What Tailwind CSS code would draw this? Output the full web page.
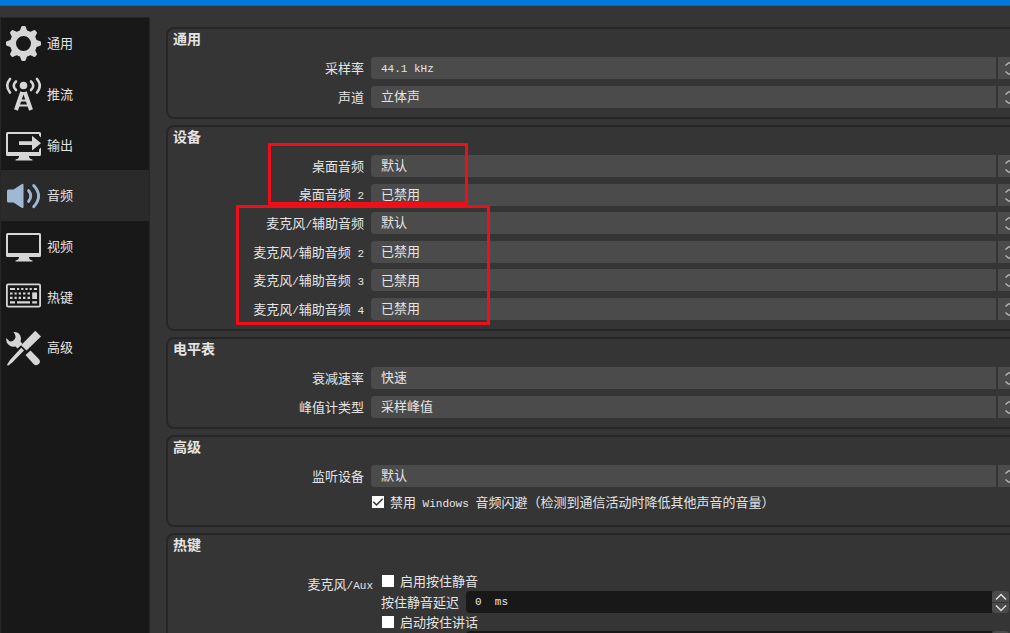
<!DOCTYPE html>
<html lang="zh-CN">

<head>
    <meta charset="UTF-8">
    <meta name="viewport" content="width=device-width, initial-scale=1.0">
    <title>设置 - 音频</title>
    <script src="https://cdn.jsdelivr.net/npm/@tailwindcss/browser@4"></script>
    <style>
        body {
            font-family: 'Liberation Mono', 'Noto Sans CJK SC', monospace;
        }
    </style>
</head>

<body class="bg-[#353535] text-[#e4e4e4] text-[13px] h-screen overflow-hidden flex flex-col">
    <svg class="hidden">
        <symbol id="tooth" viewBox="0 0 36 36">
            <path d="M14.5 7 L16.3 1.8 Q16.6 1 17.4 1 H19.6 Q20.4 1 20.7 1.8 L22.5 7 Z" />
        </symbol>
        <symbol id="updown" viewBox="0 0 24 22">
            <path d="M7.5 8.5 L10.500 6 H13.500 L16.500 8.500 M7.500 14.500 L10.500 17 H13.500 L16.500 14.500" fill="none" stroke="#b4b4b4" stroke-width="1.500" />
        </symbol>
    </svg>

    <div class="h-[6px] shrink-0 bg-[#0078d7] border-b border-[#1464a8]"></div>

    <div class="flex flex-1 min-h-0 pt-[11px]">
        <!-- Sidebar -->
        <nav class="w-[150px] shrink-0 bg-[#181818] border border-b-0 border-[#262626]">
            <div class="h-[355px] flex flex-col">
                <a href="#general" class="flex-1 flex items-center gap-[6px] pl-1">
                    <svg class="w-9 h-9" viewBox="0 0 36 36" fill="#d6d6d6">
                        <circle cx="18.5" cy="18.5" r="10.5" fill="none" stroke="#d6d6d6" stroke-width="6" />
                        <use href="#tooth" width="36" height="36" />
                        <use href="#tooth" width="36" height="36" transform="rotate(45 18.5 18.5)" />
                        <use href="#tooth" width="36" height="36" transform="rotate(90 18.5 18.5)" />
                        <use href="#tooth" width="36" height="36" transform="rotate(135 18.5 18.5)" />
                        <use href="#tooth" width="36" height="36" transform="rotate(180 18.5 18.5)" />
                        <use href="#tooth" width="36" height="36" transform="rotate(225 18.5 18.5)" />
                        <use href="#tooth" width="36" height="36" transform="rotate(270 18.5 18.5)" />
                        <use href="#tooth" width="36" height="36" transform="rotate(315 18.5 18.5)" />
                    </svg>
                    <span class="pt-[3px]">通用</span>
                </a>
                <a href="#stream" class="flex-1 flex items-center gap-[6px] pl-1">
                    <svg class="w-9 h-9" viewBox="0 0 36 36" fill="none" stroke="#d6d6d6" stroke-width="2.6" stroke-linecap="round">
                        <circle cx="18.5" cy="9.5" r="3.8" fill="#d6d6d6" stroke="none" />
                        <path d="M5 3 Q-.5 9.500 5 16.500 M32 3 Q37.500 9.500 32 16.500" />
                        <path d="M11 5.500 Q6.500 9.500 11 14 M26 5.500 Q30.500 9.500 26 14" />
                        <path d="M17.200 16 L11 34 M19.800 16 L26 34" stroke-width="4" stroke-linecap="butt" />
                        <path d="M15 17 H22 M14.500 24.500 H22.500 M12.500 29.500 H24.500" stroke-width="2" stroke-linecap="butt" />
                    </svg>
                    <span class="pt-[3px]">推流</span>
                </a>
                <a href="#output" class="flex-1 flex items-center gap-[6px] pl-1">
                    <svg class="w-9 h-9" viewBox="0 0 36 36" fill="#d6d6d6">
                        <path d="M2.500 5 H34.500 Q36 5 36 6.500 V10.500 L34 8.500 V7 H3 V25 H34 V22.500 L36 20.500 V27.500 Q36 29 34.500 29 H24 Q24 32 27.500 32.500 V33.500 H10.500 V32.500 Q14 32 14 29 H2.500 Q1 29 1 27.500 V6.500 Q1 5 2.500 5 Z" />
                        <path d="M14 14.300 H27 V8.800 L36 16.200 L27 23.500 V18 H14 Z" />
                    </svg>
                    <span class="pt-[3px]">输出</span>
                </a>
                <a href="#audio" aria-current="page" class="flex-1 flex items-center gap-[6px] pl-1 bg-[#2a2a2a]">
                    <svg class="w-9 h-9" viewBox="0 0 36 36" fill="#9fb9d5">
                        <path d="M3.500 11.500 H8.500 L17 6 Q18.500 5.400 18.500 6.900 V29 Q18.500 30.500 17 29.900 L8.500 24.500 H3.500 Q2 24.500 2 23 V13 Q2 11.500 3.500 11.500 Z" />
                        <path d="M23.500 12.500 Q28 18 23.500 23.500" fill="none" stroke="#9fb9d5" stroke-width="2.800" stroke-linecap="round" />
                        <path d="M28.700 7.500 Q38.500 18 28.700 28.800" fill="none" stroke="#9fb9d5" stroke-width="2.800" stroke-linecap="round" />
                    </svg>
                    <span class="pt-[3px]">音频</span>
                </a>
                <a href="#video" class="flex-1 flex items-center gap-[6px] pl-1">
                    <svg class="w-9 h-9" viewBox="0 0 36 36" fill="#d6d6d6">
                        <path fill-rule="evenodd" d="M2.500 5 H34.500 Q36 5 36 6.500 V27.500 Q36 29 34.500 29 H24 Q24 32 27.500 32.500 V33.500 H10.500 V32.500 Q14 32 14 29 H2.500 Q1 29 1 27.500 V6.500 Q1 5 2.500 5 Z M3 7 V25 H34 V7 Z" />
                    </svg>
                    <span class="pt-[3px]">视频</span>
                </a>
                <a href="#hotkeys" class="flex-1 flex items-center gap-[6px] pl-1">
                    <svg class="w-9 h-9" viewBox="0 0 36 36" fill="none" stroke="#d6d6d6">
                        <rect x="1.900" y="5.400" width="33.200" height="22.200" rx="1.200" stroke-width="1.800" />
                        <path d="M5 10 H10 M12 10 H14.200 M16.200 10 H18.400 M20.400 10 H22.600 M24.600 10 H26.800 M28.800 10 H32" stroke-width="2.200" />
                        <path d="M5 14.500 H7.500 M9.500 14.500 H11.700 M13.700 14.500 H16 M18 14.500 H20.500 M22.500 14.500 H25" stroke-width="2.200" />
                        <path d="M5 18.800 H7.500 M9.500 18.800 H11.700 M13.700 18.800 H16 M18 18.800 H20.500 M22.500 18.800 H25" stroke-width="2.200" />
                        <path d="M27.200 16.700 H32" stroke-width="6.600" />
                        <path d="M5 23.300 H10 M12 23.300 H25 M27.200 23.300 H32" stroke-width="2.200" />
                    </svg>
                    <span class="pt-[3px]">热键</span>
                </a>
                <a href="#advanced" class="flex-1 flex items-center gap-[6px] pl-1">
                    <svg class="w-9 h-9" viewBox="0 0 36 36" fill="#d6d6d6">
                        <path d="M30.300 .8 L36 6.500 L21.500 20.500 L16 15.200 Z" />
                        <path d="M16.200 17.700 L19 20.500 L7.500 32.300 L3 35.800 L2 34.800 L5 30 Z" />
                        <path d="M8.500 2 Q13.500 1.500 15.500 6 Q16.500 9 15.500 11.500 L17.500 14 L12.500 18.500 L10.500 16.500 Q4.500 17.500 1.800 12.500 Q1 10.500 1.200 8 L4.500 11.200 Q7.500 12 9.500 9.500 Q11.500 7 10 4.500 Z" />
                        <path d="M20.500 25 L25.500 20.500 L33.800 29 Q36 31.500 34 33.800 Q31.500 36.500 28.500 34 Z" />
                    </svg>
                    <span class="pt-[3px]">高级</span>
                </a>
            </div>
        </nav>

        <!-- Settings, the panel runs on past the right edge -->
        <main class="flex-1 min-w-0 pt-[10px] pl-4">
            <form class="-mr-6 flex flex-col gap-[6px]">
                <fieldset class="h-[92px] border-2 border-[#262626] rounded-lg pr-[10px]">
                    <h2 class="h-7 pl-[5px] pt-[2px] text-[14px] leading-[18px] font-bold">通用</h2>
                    <div class="h-[51px] flex flex-col justify-between">
                        <div class="flex h-[22px] items-center">
                            <label for="rate" class="w-[196px] mr-[7px] pt-[3px] text-right">采样率</label>
                            <select id="rate" class="appearance-none flex-1 h-full pl-[10px] pt-[2px] bg-[#4b4b4b] rounded-l text-[11px]"><option>44.1 kHz</option></select>
                            <svg class="ml-[2px] w-6 h-[22px] bg-[#4b4b4b]"><use href="#updown" /></svg>
                        </div>
                        <div class="flex h-[22px] items-center">
                            <label for="channels" class="w-[196px] mr-[7px] pt-[3px] text-right">声道</label>
                            <select id="channels" class="appearance-none flex-1 h-full pl-[10px] pt-[2px] bg-[#4b4b4b] rounded-l"><option>立体声</option></select>
                            <svg class="ml-[2px] w-6 h-[22px] bg-[#4b4b4b]"><use href="#updown" /></svg>
                        </div>
                    </div>
                </fieldset>

                <fieldset class="relative h-[206px] border-2 border-[#262626] rounded-lg pr-[10px]">
                    <h2 class="h-7 pl-[5px] pt-[2px] text-[14px] leading-[18px] font-bold">设备</h2>
                    <div class="h-[165px] flex flex-col justify-between">
                        <div class="flex h-[22px] items-center">
                            <label for="desktop1" class="w-[196px] mr-[7px] pt-[3px] text-right">桌面音频</label>
                            <select id="desktop1" class="appearance-none flex-1 h-full pl-[10px] pt-[2px] bg-[#4b4b4b] rounded-l"><option>默认</option></select>
                            <svg class="ml-[2px] w-6 h-[22px] bg-[#4b4b4b]"><use href="#updown" /></svg>
                        </div>
                        <div class="flex h-[22px] items-center">
                            <label for="desktop2" class="w-[196px] mr-[7px] pt-[3px] text-right">桌面音频<span class="text-[11px]"> 2</span></label>
                            <select id="desktop2" class="appearance-none flex-1 h-full pl-[10px] pt-[2px] bg-[#4b4b4b] rounded-l"><option>已禁用</option></select>
                            <svg class="ml-[2px] w-6 h-[22px] bg-[#4b4b4b]"><use href="#updown" /></svg>
                        </div>
                        <div class="flex h-[22px] items-center">
                            <label for="mic1" class="w-[196px] mr-[7px] pt-[3px] text-right">麦克风<span class="text-[11px]">/</span>辅助音频</label>
                            <select id="mic1" class="appearance-none flex-1 h-full pl-[10px] pt-[2px] bg-[#4b4b4b] rounded-l"><option>默认</option></select>
                            <svg class="ml-[2px] w-6 h-[22px] bg-[#4b4b4b]"><use href="#updown" /></svg>
                        </div>
                        <div class="flex h-[22px] items-center">
                            <label for="mic2" class="w-[196px] mr-[7px] pt-[3px] text-right">麦克风<span class="text-[11px]">/</span>辅助音频<span class="text-[11px]"> 2</span></label>
                            <select id="mic2" class="appearance-none flex-1 h-full pl-[10px] pt-[2px] bg-[#4b4b4b] rounded-l"><option>已禁用</option></select>
                            <svg class="ml-[2px] w-6 h-[22px] bg-[#4b4b4b]"><use href="#updown" /></svg>
                        </div>
                        <div class="flex h-[22px] items-center">
                            <label for="mic3" class="w-[196px] mr-[7px] pt-[3px] text-right">麦克风<span class="text-[11px]">/</span>辅助音频<span class="text-[11px]"> 3</span></label>
                            <select id="mic3" class="appearance-none flex-1 h-full pl-[10px] pt-[2px] bg-[#4b4b4b] rounded-l"><option>已禁用</option></select>
                            <svg class="ml-[2px] w-6 h-[22px] bg-[#4b4b4b]"><use href="#updown" /></svg>
                        </div>
                        <div class="flex h-[22px] items-center">
                            <label for="mic4" class="w-[196px] mr-[7px] pt-[3px] text-right">麦克风<span class="text-[11px]">/</span>辅助音频<span class="text-[11px]"> 4</span></label>
                            <select id="mic4" class="appearance-none flex-1 h-full pl-[10px] pt-[2px] bg-[#4b4b4b] rounded-l"><option>已禁用</option></select>
                            <svg class="ml-[2px] w-6 h-[22px] bg-[#4b4b4b]"><use href="#updown" /></svg>
                        </div>
                    </div>
                    <!-- Highlight boxes over the device rows -->
                    <div class="absolute left-[100px] top-4 w-[200px] h-[62px] border-3 border-[#ee0f19] pointer-events-none"></div>
                    <div class="absolute left-[68px] top-[78px] w-[254px] h-[120px] border-3 border-[#ee0f19] pointer-events-none"></div>
                </fieldset>

                <fieldset class="h-[92px] border-2 border-[#262626] rounded-lg pr-[10px]">
                    <h2 class="h-7 pl-[5px] pt-[2px] text-[14px] leading-[18px] font-bold">电平表</h2>
                    <div class="h-[51px] flex flex-col justify-between">
                        <div class="flex h-[22px] items-center">
                            <label for="decay" class="w-[196px] mr-[7px] pt-[3px] text-right">衰减速率</label>
                            <select id="decay" class="appearance-none flex-1 h-full pl-[10px] pt-[2px] bg-[#4b4b4b] rounded-l"><option>快速</option></select>
                            <svg class="ml-[2px] w-6 h-[22px] bg-[#4b4b4b]"><use href="#updown" /></svg>
                        </div>
                        <div class="flex h-[22px] items-center">
                            <label for="peak" class="w-[196px] mr-[7px] pt-[3px] text-right">峰值计类型</label>
                            <select id="peak" class="appearance-none flex-1 h-full pl-[10px] pt-[2px] bg-[#4b4b4b] rounded-l"><option>采样峰值</option></select>
                            <svg class="ml-[2px] w-6 h-[22px] bg-[#4b4b4b]"><use href="#updown" /></svg>
                        </div>
                    </div>
                </fieldset>

                <fieldset class="h-[92px] border-2 border-[#262626] rounded-lg pr-[10px]">
                    <h2 class="h-7 pl-[5px] pt-[2px] text-[14px] leading-[18px] font-bold">高级</h2>
                    <div class="flex h-[22px] items-center">
                        <label for="monitor" class="w-[196px] mr-[7px] pt-[3px] text-right">监听设备</label>
                        <select id="monitor" class="appearance-none flex-1 h-full pl-[10px] pt-[2px] bg-[#4b4b4b] rounded-l"><option>默认</option></select>
                        <svg class="ml-[2px] w-6 h-[22px] bg-[#4b4b4b]"><use href="#updown" /></svg>
                    </div>
                    <div class="flex items-center gap-[6px] mt-[5px] pl-[204px] h-5">
                        <span class="relative w-3 h-3">
                            <input id="ducking" type="checkbox" checked class="appearance-none block w-3 h-3 bg-white">
                            <svg class="absolute inset-0 w-3 h-3 pointer-events-none" viewBox="0 0 12 12" fill="none" stroke="#333" stroke-width="1.500"><path d="M1.300 5.800 L4.500 9 L10.700 2.800" /></svg>
                        </span>
                        <label for="ducking" class="pt-[3px]">禁用<span class="text-[11px]"> Windows </span>音频闪避（检测到通信活动时降低其他声音的音量）</label>
                    </div>
                </fieldset>

                <fieldset class="border-2 border-[#262626] rounded-lg pr-[22px]">
                    <h2 class="h-7 pl-[5px] pt-[2px] text-[14px] leading-[18px] font-bold">热键</h2>
                    <div class="flex pt-2">
                        <div class="w-[205px] mr-2 pt-[5px] text-right leading-5">麦克风<span class="text-[11px]">/Aux</span></div>
                        <div class="flex-1">
                            <div class="flex items-center gap-[6px] h-5 pl-[1px]">
                                <input id="ptm" type="checkbox" class="appearance-none w-3 h-3 bg-white">
                                <label for="ptm" class="pt-[3px]">启用按住静音</label>
                            </div>
                            <div class="flex items-center h-[22px]">
                                <label for="ptmDelay" class="w-[85px] pt-[3px]">按住静音延迟</label>
                                <input id="ptmDelay" type="text" value="0  ms" class="flex-1 h-full pl-[9px] bg-[#181818] rounded-l text-[11px]">
                                <div class="w-[17px] mr-[1px] flex flex-col gap-[1px]">
                                    <button type="button" aria-label="增加" class="h-[11px] bg-[#4b4b4b] rounded-t flex items-center justify-center">
                                        <svg class="w-3 h-2" viewBox="0 0 12 8" fill="none" stroke="#ddd" stroke-width="1.500"><path d="M1 6.500 L6 1.500 L11 6.500" /></svg>
                                    </button>
                                    <button type="button" aria-label="减少" class="h-[10px] bg-[#4b4b4b] rounded-b flex items-center justify-center">
                                        <svg class="w-3 h-2" viewBox="0 0 12 8" fill="none" stroke="#ddd" stroke-width="1.500"><path d="M1 1.500 L6 6.500 L11 1.500" /></svg>
                                    </button>
                                </div>
                            </div>
                            <div class="flex items-center gap-[6px] h-[18px] pl-[1px]">
                                <input id="ptt" type="checkbox" class="appearance-none w-3 h-3 bg-white">
                                <label for="ptt" class="pt-[3px]">启动按住讲话</label>
                            </div>
                            <div class="flex h-[22px] pl-[85px]">
                                <input type="text" aria-label="按住讲话延迟" class="flex-1 h-full bg-[#181818] rounded-l text-[11px]">
                                <div class="w-[17px] mr-[1px] bg-[#4b4b4b] rounded"></div>
                            </div>
                        </div>
                    </div>
                </fieldset>
            </form>
        </main>
    </div>
</body>

</html>
